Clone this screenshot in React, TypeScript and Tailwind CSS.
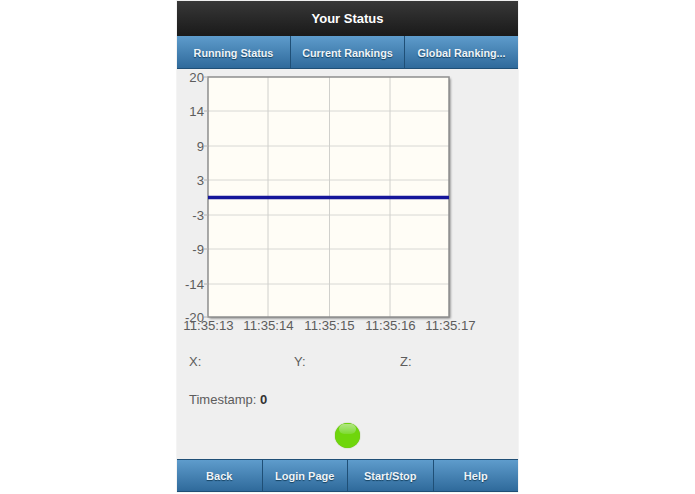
import React from 'react';

const yTicks = [
  { label: '20', y: 8 },
  { label: '14', y: 42 },
  { label: '9', y: 77 },
  { label: '3', y: 111 },
  { label: '-3', y: 146 },
  { label: '-9', y: 180 },
  { label: '-14', y: 215 },
  { label: '-20', y: 248 },
];

const xTicks = [
  { label: '11:35:13', x: 31.5 },
  { label: '11:35:14', x: 91.5 },
  { label: '11:35:15', x: 152.5 },
  { label: '11:35:16', x: 213.5 },
  { label: '11:35:17', x: 273.5 },
];

function Chart() {
  return (
    <svg width="341" height="272" viewBox="0 0 341 272" className="block">
      <defs>
        <filter id="shadow" x="-5%" y="-5%" width="110%" height="110%">
          <feDropShadow dx="1.5" dy="1.5" stdDeviation="1" floodColor="#000" floodOpacity="0.45" />
        </filter>
      </defs>
      <rect x="31" y="8" width="241" height="240" fill="#fffdf6" filter="url(#shadow)" />
      {[42, 77, 111, 146, 180, 215].map((y) => (
        <line key={y} x1="31" x2="272" y1={y} y2={y} stroke="#d8d8d4" strokeWidth="1" />
      ))}
      {[91, 152.5, 213].map((x) => (
        <line key={x} x1={x} x2={x} y1="8" y2="248" stroke="#d0d0cc" strokeWidth="1" />
      ))}
      <rect x="31" y="8" width="241" height="240" fill="none" stroke="#8e8e8e" strokeWidth="1.5" />
      <line x1="31" x2="272" y1="128.5" y2="128.5" stroke="#16169a" strokeWidth="3.5" />
      {yTicks.map((t) => (
        <g key={t.label}>
          <line x1="27" x2="31" y1={t.y} y2={t.y} stroke="#b0b0b0" />
          <text x="27" y={t.y + 5} textAnchor="end" fontSize="13.2" fill="#5c5c5c" fontFamily="'Liberation Sans', sans-serif">
            {t.label}
          </text>
        </g>
      ))}
      {xTicks.map((t) => (
        <text key={t.label} x={t.x} y="261" textAnchor="middle" fontSize="13.2" fill="#5c5c5c" fontFamily="'Liberation Sans', sans-serif">
          {t.label}
        </text>
      ))}
    </svg>
  );
}

function BarButton({ label, small, last }: { label: string; small?: boolean; last?: boolean }) {
  return (
    <div
      className={`flex-1 flex items-center justify-center pt-[2px] font-bold text-[#eef4f9] border-r border-[#1f4f76] [text-shadow:0_1px_1px_#14405f] ${
        small ? 'text-[10.8px]' : 'text-[11px]'
      } ${last ? 'border-r-0' : ''}`}
    >
      {label}
    </div>
  );
}

export default function App() {
  return (
    <div className="w-[695px] h-[494px] bg-white overflow-hidden font-['Liberation_Sans',Arial,sans-serif]">
      <div className="w-[341px] ml-[177px] h-[492px] flex flex-col bg-[#efefef] shadow-[0_0_1px_#bbb]">
        {/* Header */}
        <div className="h-[35px] mt-px flex items-center justify-center bg-gradient-to-b from-[#383838] to-[#1a1a1a] text-[13px] font-bold text-white">
          Your Status
        </div>

        {/* Tabs */}
        <div className="h-[33px] flex bg-gradient-to-b from-[#5e9ccc] to-[#2f6a9b] border-b border-[#1f4f76]">
          <BarButton label="Running Status" small />
          <BarButton label="Current Rankings" small />
          <BarButton label="Global Ranking..." small last />
        </div>

        {/* Chart */}
        <Chart />

        {/* Values */}
        <div className="flex mt-[13px] pl-[12px] text-[13px] leading-[16px] text-[#5c5c5c]">
          <span className="w-[105px]">X:</span>
          <span className="w-[106px]">Y:</span>
          <span>Z:</span>
        </div>
        <div className="mt-[22px] pl-[12px] text-[13px] leading-[16px] text-[#5c5c5c]">
          Timestamp: <b className="text-[#333]">0</b>
        </div>

        {/* Status light */}
        <div className="flex justify-center mt-[15px]">
          <div className="relative w-[25px] h-[25px] rounded-full bg-[#6fd60c] shadow-[0_0_1px_#5a9a10]">
            <div className="absolute left-[4px] right-[4px] top-[1px] h-[10px] rounded-full bg-gradient-to-b from-[#b0e680] to-[#7edb2c]" />
          </div>
        </div>

        {/* Footer */}
        <div className="mt-auto h-[33px] flex bg-gradient-to-b from-[#5e9ccc] to-[#2f6a9b] border-t border-b border-[#1f4f76]">
          <BarButton label="Back" />
          <BarButton label="Login Page" />
          <BarButton label="Start/Stop" />
          <BarButton label="Help" last />
        </div>
      </div>
    </div>
  );
}
